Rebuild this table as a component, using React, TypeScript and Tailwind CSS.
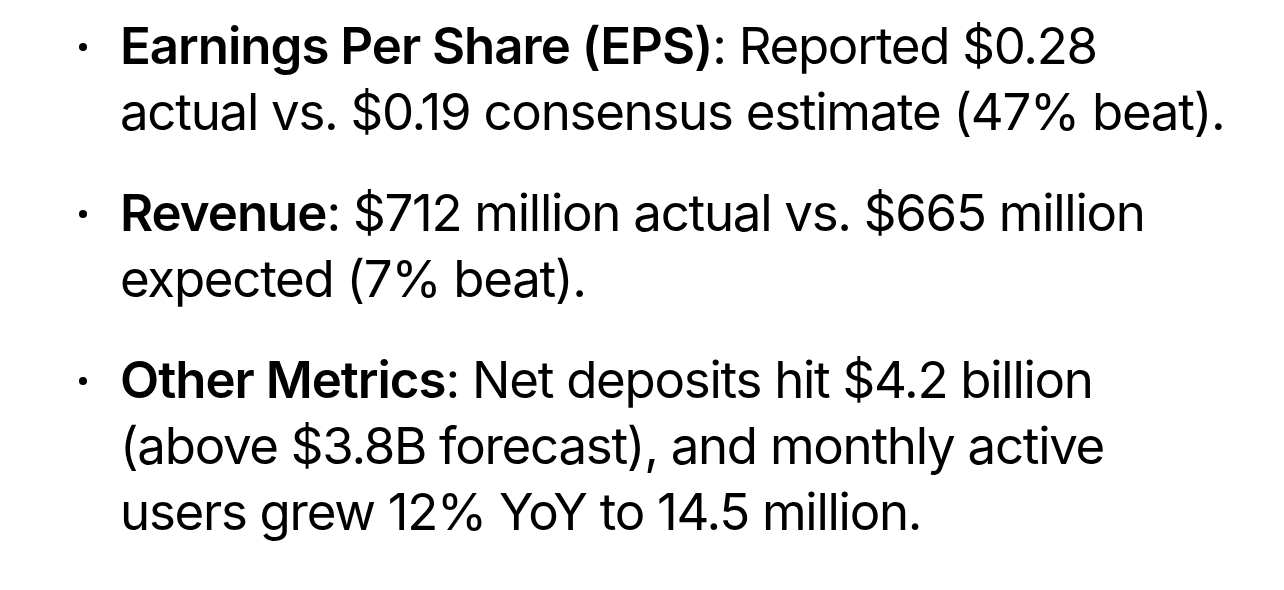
const items = [
  {
    label: "Earnings Per Share (EPS)",
    text: "Reported $0.28 actual vs. $0.19 consensus estimate (47% beat).",
  },
  {
    label: "Revenue",
    text: "$712 million actual vs. $665 million expected (7% beat).",
  },
  {
    label: "Other Metrics",
    text: "Net deposits hit $4.2 billion (above $3.8B forecast), and monthly active users grew 12% YoY to 14.5 million.",
  },
];

export default function App() {
  return (
    <main className="min-h-[590px] w-[1284px] bg-white font-['Inter','Liberation_Sans',sans-serif] text-black">
      <ul className="flex flex-col gap-[35px] pt-[13px] pl-[79px]">
        {items.map((item) => (
          <li key={item.label} className="flex text-[51px] leading-[66px] tracking-[-0.025em]">
            <span className="mt-[30px] mr-[33px] h-2 w-2 shrink-0 rounded-full bg-black" />
            <p className="w-[1122px]">
              <strong className="font-semibold tracking-[-0.02em]">{item.label}</strong>: {item.text}
            </p>
          </li>
        ))}
      </ul>
    </main>
  );
}
